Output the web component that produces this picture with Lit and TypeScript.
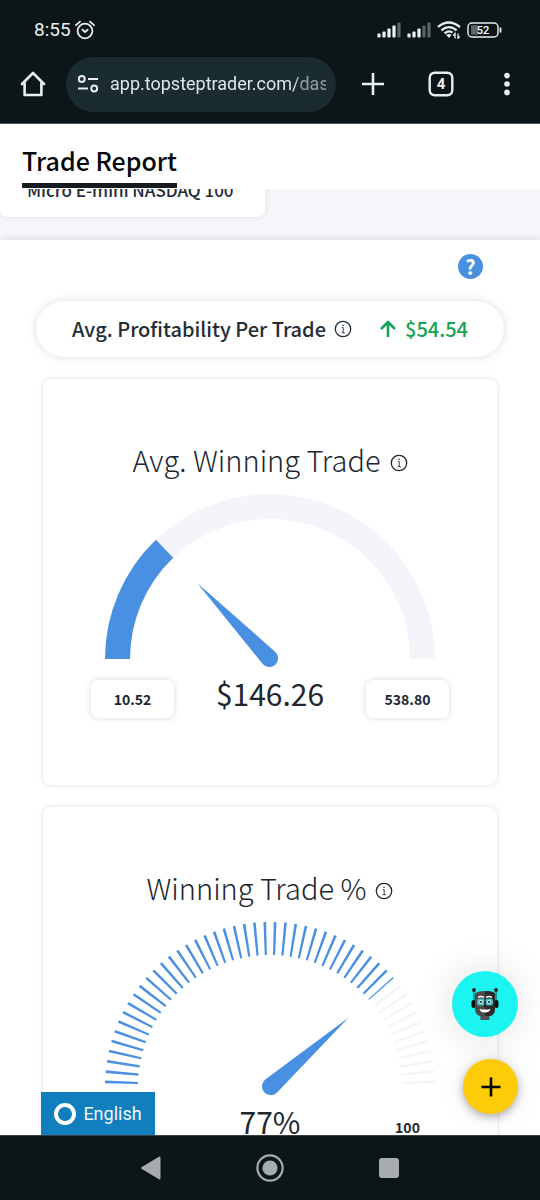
import { LitElement, html, css, svg, nothing } from "lit";
import { customElement, property } from "lit/decorators.js";

const infoIcon = html`<svg class="info" viewBox="0 0 18 18" width="18" height="18" aria-hidden="true">
  <circle cx="9" cy="9" r="7.7" fill="none" stroke="currentColor" stroke-width="1.3" />
  <path d="M7.8 7.6H9.2V12.6M7.6 12.7H10.8" fill="none" stroke="currentColor" stroke-width=".9" />
  <circle cx="9" cy="5.3" r=".8" fill="currentColor" />
</svg>`;

/** Half-circle dial with a needle, a value and its two limits. */
@customElement("gauge-card")
export class GaugeCard extends LitElement {
  @property() heading = "";
  @property() value = "";
  @property() low = "";
  @property() high = "";
  @property({ type: Number }) ratio = 0;
  @property({ type: Boolean }) ticks = false;
  @property({ type: Boolean }) boxed = false;

  static styles = css`
    :host { display: block; }
    .card {
      background: #fff;
      border-radius: 8px;
      box-shadow: 0 0 5px rgba(40, 60, 75, 0.17);
      padding: 56px 16px 61px;
      display: flex;
      flex-direction: column;
      align-items: center;
      color: #21272f;
    }
    .title {
      margin: 0 0 11px;
      display: flex;
      align-items: center;
      gap: 9px;
      font-size: 29px;
      font-weight: 200;
      line-height: 48px;
      white-space: nowrap;
    }
    .info { display: block; flex: none; margin-top: 8px; }
    .dial { display: block; width: 330px; max-width: 100%; overflow: visible; }
    .readout {
      display: flex;
      justify-content: space-between;
      align-items: center;
      width: 358px;
      max-width: 100%;
      margin-top: 6px;
    }
    .limit {
      width: 83px;
      line-height: 38px;
      border-radius: 7px;
      text-align: center;
      font-size: 14px;
      font-weight: 700;
    }
    .boxed .limit { box-shadow: 0 0 6px rgba(40, 50, 80, 0.18); }
    .value { font-size: 30px; line-height: 38px; margin-bottom: 12px; }
  `;

  private arc(r: number, share: number) {
    const a = Math.PI * (1 - share);
    return `M${165 - r} 165A${r} ${r} 0 0 1 ${165 + r * Math.cos(a)} ${165 - r * Math.sin(a)}`;
  }

  render() {
    const band = this.ticks ? 33 : 25;
    const r = 165 - band / 2;
    const steps = 50;
    const stroke = (share: number, color: string) => svg`<path d=${this.arc(r, share)} fill="none"
      stroke=${color} stroke-width=${band} pathLength=${steps * share}
      stroke-dasharray=${this.ticks ? ".25 .75" : nothing}
      stroke-dashoffset=${this.ticks ? "-.375" : nothing} />`;
    return html`<section class="card">
      <h2 class="title">${this.heading}${infoIcon}</h2>
      <svg class="dial" viewBox="0 0 330 174" role="img" aria-label="${this.heading} ${this.value}">
        ${stroke(1, "#f4f5fa")} ${stroke(this.ratio, "#4a90e2")}
        <path transform="rotate(${this.ratio * 180} 165 165)" fill="#4a90e2"
          d="M60 165L164 156.2A8.8 8.8 0 1 1 164 173.8Z" />
      </svg>
      <div class="readout ${this.boxed ? "boxed" : ""}">
        <span class="limit">${this.low}</span>
        <span class="value">${this.value}</span>
        <span class="limit">${this.high}</span>
      </div>
    </section>`;
  }
}

@customElement("app-root")
export class AppRoot extends LitElement {
  static styles = css`
    :host {
      display: grid;
      grid-template-columns: minmax(0, 1fr);
      grid-template-rows: auto minmax(0, 1fr) auto;
      height: 100vh;
      overflow: hidden;
      background: #fff;
      color: #242c36;
      font-family: "Noto Sans CJK SC", "Noto Sans", sans-serif;
    }
    * { box-sizing: border-box; }
    svg { display: block; flex: none; }
    button { border: 0; padding: 0; margin: 0; background: none; color: inherit; font: inherit; }

    .chrome { background: #0c1619; color: #e9eff1; font-family: Roboto, sans-serif; border-bottom: 1px solid #50585b; }
    .status { display: flex; align-items: center; height: 56px; padding: 4px 38px 0 34px; gap: 4px; }
    .clock { font-size: 19px; line-height: 24px; }
    .signals { margin-left: auto; display: flex; align-items: center; gap: 6px; }
    .toolbar { display: flex; align-items: center; height: 67px; padding: 0 20px 11px; }
    .address {
      display: flex;
      align-items: center;
      flex: 1;
      min-width: 0;
      height: 55px;
      margin-left: 20px;
      padding: 0 10px 0 12px;
      gap: 12px;
      border-radius: 28px;
      background: #1b2b32;
    }
    .url {
      flex: 1;
      min-width: 0;
      border: 0;
      padding: 0;
      background: none;
      outline: none;
      color: #dfe6e9;
      font: 18px/24px Roboto, sans-serif;
      mask-image: linear-gradient(to left, rgba(0, 0, 0, 0.6) 26px, #000 32px);
    }
    .actions { display: flex; align-items: center; justify-content: space-between; width: 162px; margin-left: 22px; }

    .page { position: relative; overflow: hidden; display: flex; flex-direction: column; }
    .header { position: relative; z-index: 1; background: #fff; height: 65px; padding: 16px 22px 0; flex: none; }
    .heading {
      display: inline-block;
      margin: 0;
      padding-bottom: 3px;
      border-bottom: 5px solid #181b20;
      color: #060708;
      font-size: 25px;
      font-weight: 500;
      line-height: 40px;
    }
    .content { background: #f5f6fa; flex: none; }
    .market {
      width: 265px;
      max-width: 100%;
      margin: -24px 0 23px;
      padding: 10px 27px 13px;
      border-radius: 0 0 7px 7px;
      background: #fff;
      box-shadow: 0 0 6px rgba(40, 50, 80, 0.12);
      font-size: 17px;
      font-weight: 500;
      line-height: 29px;
      white-space: nowrap;
    }
    .panel {
      background: #fff;
      box-shadow: 0 0 7px rgba(40, 50, 80, 0.16);
      padding: 14px 43px 24px;
      display: flex;
      flex-direction: column;
      gap: 22px;
    }
    .help {
      align-self: flex-end;
      width: 25px;
      height: 25px;
      margin-right: 14px;
      border-radius: 50%;
      background: #4a90e2;
      color: #fff;
      font-size: 20px;
      font-weight: 700;
      line-height: 24px;
      text-align: center;
    }
    .summary {
      display: flex;
      align-items: center;
      justify-content: center;
      height: 56px;
      margin: 0 -7px;
      border-radius: 28px;
      box-shadow: 0 0 8px rgba(40, 60, 75, 0.18);
      font-size: 20px;
      font-weight: 500;
      line-height: 28px;
      white-space: nowrap;
    }
    .summary .info { margin: 0 28px 0 8px; }
    .gain { display: flex; align-items: center; gap: 9px; color: #13a456; }

    .float { position: absolute; display: flex; align-items: center; justify-content: center; }
    .bot {
      right: 22px;
      bottom: 98px;
      width: 66px;
      height: 66px;
      border-radius: 50%;
      background: #1cf4f2;
      box-shadow: 0 0 40px rgba(0, 0, 0, 0.13);
    }
    .add {
      right: 22px;
      bottom: 21px;
      width: 55px;
      height: 55px;
      border-radius: 50%;
      background: #fdcb08;
      color: #000;
      box-shadow: 0 3px 8px rgba(0, 0, 0, 0.3), 0 0 30px rgba(0, 0, 0, 0.08);
    }
    .language {
      left: 41px;
      bottom: 0;
      width: 114px;
      height: 43px;
      gap: 7px;
      background: #117ebe;
      color: #f2f8fc;
      font: 18px/24px Roboto, sans-serif;
    }
    .nav {
      display: flex;
      justify-content: center;
      align-items: center;
      gap: 94px;
      height: 65px;
      background: #0c1619;
      border-top: 1px solid #384043;
      color: #a7acae;
    }
  `;

  private bars(lit: number) {
    return html`<svg width="24" height="16" viewBox="0 0 24 16" aria-hidden="true">
      ${[4, 6, 9, 12, 15].map(
        (h, i) => svg`<rect x=${i * 5 + 0.4} y=${15.5 - h} width="3.2" height=${h} rx="1"
          fill=${i < lit ? "#eef2f3" : "#5b6467"} />`,
      )}
    </svg>`;
  }

  render() {
    return html`
      <header class="chrome">
        <div class="status">
          <span class="clock">8:55</span>
          <svg width="20" height="20" viewBox="0 0 20 20" fill="none" stroke="currentColor" stroke-width="1.8" stroke-linecap="round" aria-hidden="true">
            <circle cx="10" cy="11" r="7.4" /><path d="M1 5.2L5 1.6M19 5.2L15 1.6M7.5 9.8L10 12L12.7 9.8" />
          </svg>
          <div class="signals">
            ${this.bars(4)} ${this.bars(3)}
            <svg width="24" height="18" viewBox="0 0 24 18" fill="none" stroke="currentColor" stroke-width="2.3" aria-hidden="true">
              <path d="M1 6Q11.5 -3 23 6M4.4 9.3Q12 3 19.6 9.3M7.6 12.3Q12 8.8 15.5 11.6" />
              <path d="M9.2 14Q12 12 14.5 14L12 17Z" fill="currentColor" stroke="none" />
              <path d="M18 17.5V12.5L16.3 14.5M21 12.5V17.5L22.7 15.5" stroke-width="1.3" />
            </svg>
            <svg width="35" height="16" viewBox="0 0 35 16" aria-label="Battery 52">
              <rect x="4" y="3.2" width="7" height="9.6" fill="#5b6467" />
              <rect x="1" y="1" width="30" height="14" rx="4" fill="none" stroke="#e9eff1" stroke-width="1.4" />
              <path d="M33.5 5.5V10.5" stroke="#e9eff1" stroke-width="1.8" />
              <text x="16" y="12" text-anchor="middle" font-size="11" font-weight="500" fill="#fff">52</text>
            </svg>
          </div>
        </div>
        <div class="toolbar">
          <button aria-label="Home">
            <svg width="26" height="26" viewBox="0 0 26 26" fill="none" stroke="currentColor" stroke-width="2.6" stroke-linejoin="round" stroke-linecap="round">
              <path d="M2 13L13 2L24 13M4.6 11V24H21.4V11" />
            </svg>
          </button>
          <label class="address">
            <svg width="20" height="18" viewBox="0 0 20 18" fill="none" stroke="currentColor" stroke-width="2" role="img" aria-label="Address">
              <circle cx="3.8" cy="4" r="2.9" /><path d="M10 4H20M0 13.5H10" /><circle cx="16.2" cy="13.5" r="2.9" />
            </svg>
            <input class="url" type="text" value="app.topsteptrader.com/dashboard" />
          </label>
          <div class="actions">
            <button aria-label="New tab">
              <svg width="30" height="24" viewBox="0 0 30 24"><path d="M15 1V23M4 12H26" stroke="currentColor" stroke-width="2.6" /></svg>
            </button>
            <button aria-label="Tabs">
              <svg width="26" height="26" viewBox="0 0 26 26">
                <rect x="1.7" y="1.7" width="22.6" height="22.6" rx="5" fill="none" stroke="currentColor" stroke-width="2.4" />
                <text x="13" y="18.2" text-anchor="middle" font-size="15" font-weight="700" fill="currentColor">4</text>
              </svg>
            </button>
            <button aria-label="Menu">
              <svg width="26" height="24" viewBox="0 0 26 24" fill="currentColor">
                <circle cx="13" cy="3.6" r="2.8" /><circle cx="13" cy="12" r="2.8" /><circle cx="13" cy="20.4" r="2.8" />
              </svg>
            </button>
          </div>
        </div>
      </header>

      <main class="page">
        <div class="header"><h1 class="heading">Trade Report</h1></div>
        <div class="content">
          <div class="market">Micro E-mini NASDAQ 100</div>
          <div class="panel">
            <button class="help" aria-label="Help">?</button>
            <div class="summary">
              <span>Avg. Profitability Per Trade</span>${infoIcon}
              <span class="gain">
                <svg width="16" height="18" viewBox="0 0 16 18" fill="none" stroke="currentColor" stroke-width="2.6" aria-hidden="true">
                  <path d="M8 17V2.5M1 9L8 2L15 9" />
                </svg>$54.54
              </span>
            </div>
            <gauge-card heading="Avg. Winning Trade" value="$146.26" low="10.52" high="538.80" .ratio=${0.257} boxed></gauge-card>
            <gauge-card heading="Winning Trade %" value="77%" high="100" .ratio=${0.77} ticks></gauge-card>
          </div>
        </div>

        <button class="float bot" aria-label="Assistant">
          <svg width="28" height="34" viewBox="0 0 28 34">
            <path d="M3 3V15M25 3V15" stroke="#17464c" stroke-width="1" />
            <circle cx="3" cy="3" r="1.9" fill="#151515" /><circle cx="25" cy="3" r="1.9" fill="#151515" />
            <rect x="0.5" y="13" width="4" height="8" rx="2" fill="#111" /><rect x="23.5" y="13" width="4" height="8" rx="2" fill="#111" />
            <path d="M9 25H18.5V33H9.5Z" fill="#555154" />
            <path d="M4 7Q5 4 14 4Q23 4 24 7V22Q23.5 28 19 29H9Q4.5 28 4 22Z" fill="#4c494b" />
            <path d="M14 4Q23 4 24 7V22Q23.5 28 19 29H14Z" fill="#2c292b" />
            <path d="M7 10.5Q10 8.5 13 10.5M15 10.5Q18 8.5 21 10.5" stroke="#fff" stroke-width="1.5" fill="none" />
            <rect x="6" y="11.5" width="7.5" height="7" rx="2.5" fill="#42bfc4" /><rect x="14.5" y="11.5" width="7.5" height="7" rx="2.5" fill="#42bfc4" />
            <circle cx="10" cy="15" r="2" fill="#c7f5f3" /><circle cx="18" cy="15" r="2" fill="#c7f5f3" />
            <circle cx="10" cy="15" r="1.1" fill="#222" /><circle cx="18" cy="15" r="1.1" fill="#222" />
            <path d="M14 14V19.5H12.8" stroke="#111" fill="none" stroke-width="1" />
            <path d="M8.5 22Q14 23 19.5 22Q18.5 25.5 14 25.5Q9.5 25.5 8.5 22Z" fill="#fff" />
          </svg>
        </button>
        <button class="float add" aria-label="Add">
          <svg width="20" height="20" viewBox="0 0 20 20"><path d="M10 .5V19.5M.5 10H19.5" stroke="currentColor" stroke-width="2.6" /></svg>
        </button>
        <button class="float language">
          <svg width="22" height="22" viewBox="0 0 22 22" aria-hidden="true"><circle cx="11" cy="11" r="9" fill="none" stroke="#fff" stroke-width="4" /></svg>
          English
        </button>
      </main>

      <nav class="nav" aria-label="System">
        <button aria-label="Back">
          <svg width="22" height="26" viewBox="0 0 22 26"><path d="M2 13L19.5 2.5V23.5Z" fill="currentColor" stroke="currentColor" stroke-width="2" stroke-linejoin="round" /></svg>
        </button>
        <button aria-label="Home screen">
          <svg width="28" height="28" viewBox="0 0 28 28"><circle cx="14" cy="14" r="12.6" fill="none" stroke="currentColor" stroke-width="2.2" /><circle cx="14" cy="14" r="7.6" fill="currentColor" /></svg>
        </button>
        <button aria-label="Recent apps">
          <svg width="22" height="22" viewBox="0 0 22 22"><rect x="1" y="1" width="20" height="20" rx="3" fill="currentColor" /></svg>
        </button>
      </nav>
    `;
  }
}
